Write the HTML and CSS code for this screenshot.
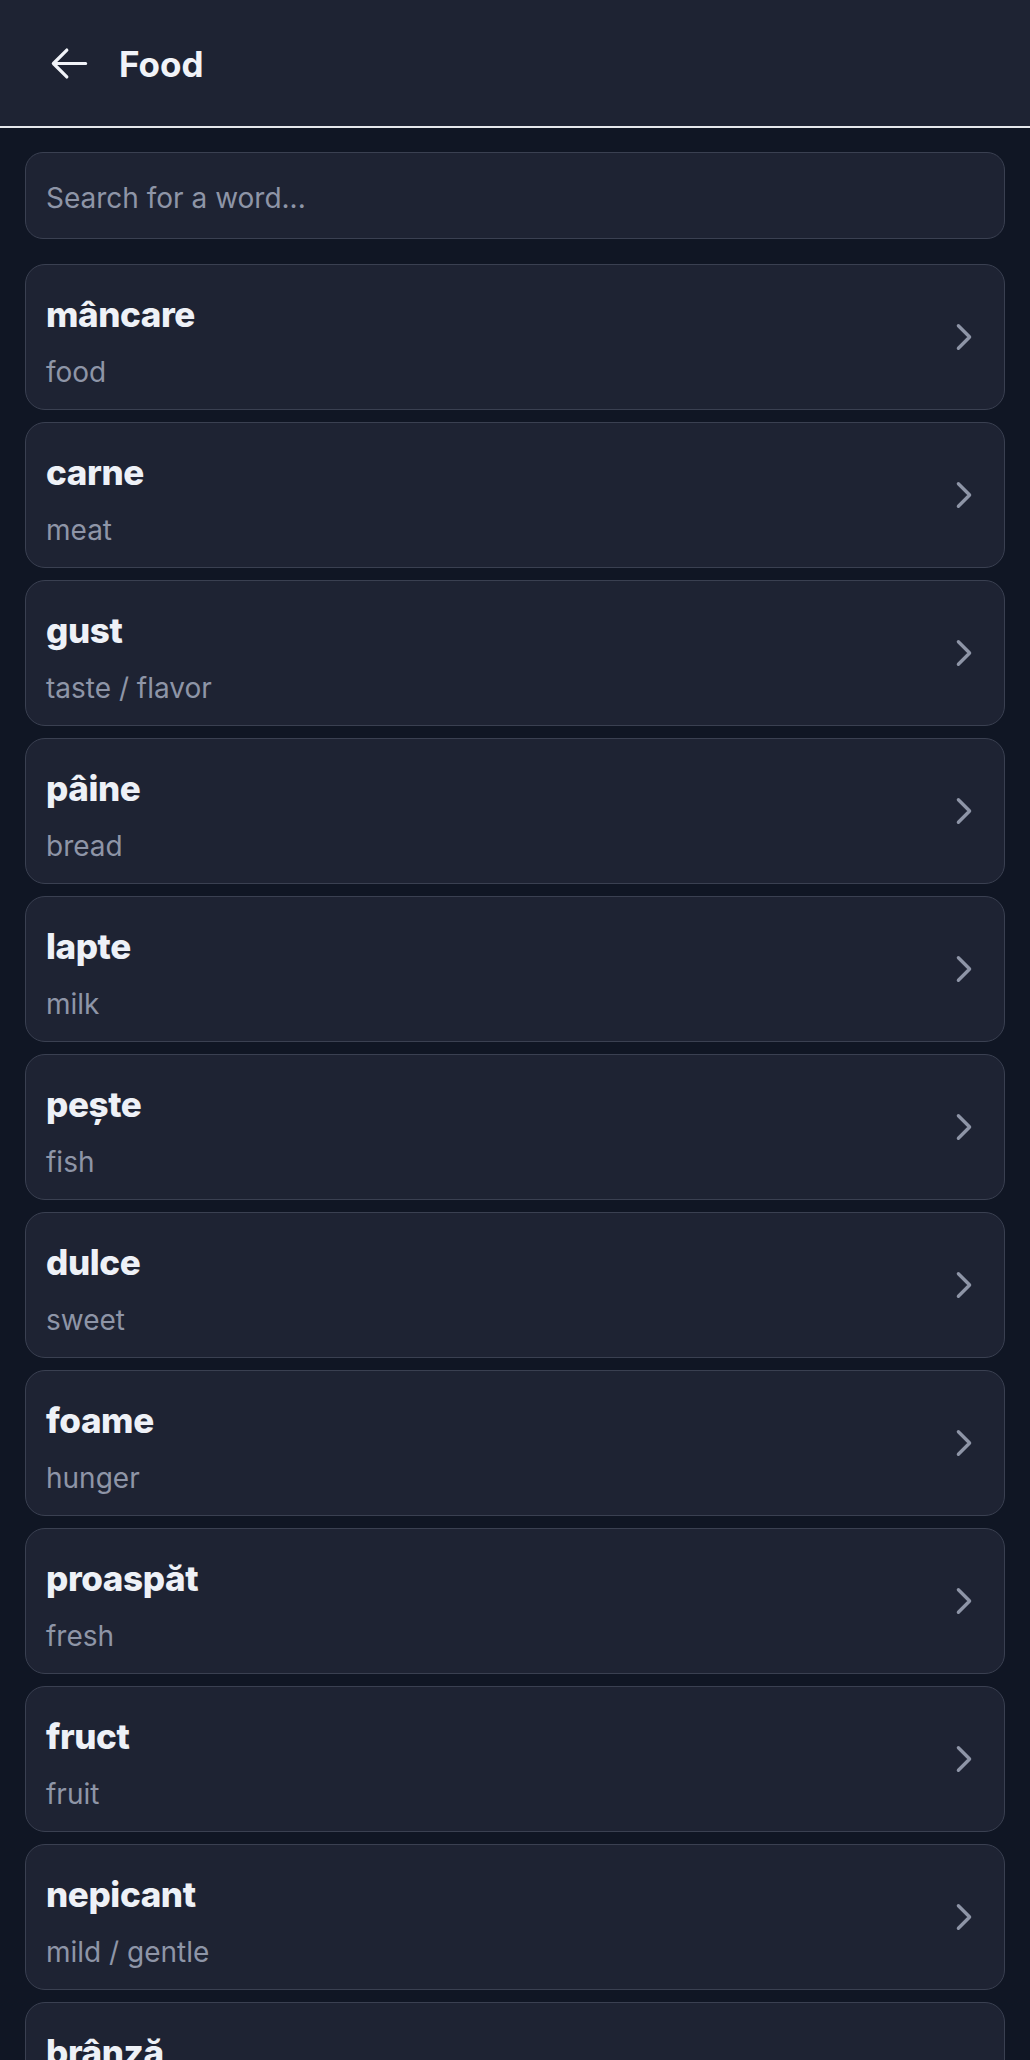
FILE: index.html
```html
<!DOCTYPE html>
<html lang="ro">
<head>
<meta charset="utf-8">
<title>Food</title>
<link rel="stylesheet" href="styles.css">
</head>
<body>
<header class="topbar">
  <button class="back" aria-label="Back">
    <svg viewBox="0 0 24 24" fill="none" stroke="currentColor" stroke-width="1.8" stroke-linecap="round" stroke-linejoin="round"><path d="M10.5 19.5 3 12m0 0 7.5-7.5M3 12h18"/></svg>
  </button>
  <h1 class="title">Food</h1>
</header>
<main class="content">
  <div class="search"><span class="placeholder">Search for a word...</span></div>
  <ul class="list">
    <li class="card"><div class="text"><div class="word">mâncare</div><div class="meaning">food</div></div><svg class="chev" viewBox="0 0 24 24" fill="none" stroke="currentColor" stroke-width="2.2" stroke-linecap="round" stroke-linejoin="round"><path d="m8.25 4.5 7.5 7.5-7.5 7.5"/></svg></li>
    <li class="card"><div class="text"><div class="word">carne</div><div class="meaning">meat</div></div><svg class="chev" viewBox="0 0 24 24" fill="none" stroke="currentColor" stroke-width="2.2" stroke-linecap="round" stroke-linejoin="round"><path d="m8.25 4.5 7.5 7.5-7.5 7.5"/></svg></li>
    <li class="card"><div class="text"><div class="word">gust</div><div class="meaning">taste / flavor</div></div><svg class="chev" viewBox="0 0 24 24" fill="none" stroke="currentColor" stroke-width="2.2" stroke-linecap="round" stroke-linejoin="round"><path d="m8.25 4.5 7.5 7.5-7.5 7.5"/></svg></li>
    <li class="card"><div class="text"><div class="word">pâine</div><div class="meaning">bread</div></div><svg class="chev" viewBox="0 0 24 24" fill="none" stroke="currentColor" stroke-width="2.2" stroke-linecap="round" stroke-linejoin="round"><path d="m8.25 4.5 7.5 7.5-7.5 7.5"/></svg></li>
    <li class="card"><div class="text"><div class="word">lapte</div><div class="meaning">milk</div></div><svg class="chev" viewBox="0 0 24 24" fill="none" stroke="currentColor" stroke-width="2.2" stroke-linecap="round" stroke-linejoin="round"><path d="m8.25 4.5 7.5 7.5-7.5 7.5"/></svg></li>
    <li class="card"><div class="text"><div class="word">pește</div><div class="meaning">fish</div></div><svg class="chev" viewBox="0 0 24 24" fill="none" stroke="currentColor" stroke-width="2.2" stroke-linecap="round" stroke-linejoin="round"><path d="m8.25 4.5 7.5 7.5-7.5 7.5"/></svg></li>
    <li class="card"><div class="text"><div class="word">dulce</div><div class="meaning">sweet</div></div><svg class="chev" viewBox="0 0 24 24" fill="none" stroke="currentColor" stroke-width="2.2" stroke-linecap="round" stroke-linejoin="round"><path d="m8.25 4.5 7.5 7.5-7.5 7.5"/></svg></li>
    <li class="card"><div class="text"><div class="word">foame</div><div class="meaning">hunger</div></div><svg class="chev" viewBox="0 0 24 24" fill="none" stroke="currentColor" stroke-width="2.2" stroke-linecap="round" stroke-linejoin="round"><path d="m8.25 4.5 7.5 7.5-7.5 7.5"/></svg></li>
    <li class="card"><div class="text"><div class="word">proaspăt</div><div class="meaning">fresh</div></div><svg class="chev" viewBox="0 0 24 24" fill="none" stroke="currentColor" stroke-width="2.2" stroke-linecap="round" stroke-linejoin="round"><path d="m8.25 4.5 7.5 7.5-7.5 7.5"/></svg></li>
    <li class="card"><div class="text"><div class="word">fruct</div><div class="meaning">fruit</div></div><svg class="chev" viewBox="0 0 24 24" fill="none" stroke="currentColor" stroke-width="2.2" stroke-linecap="round" stroke-linejoin="round"><path d="m8.25 4.5 7.5 7.5-7.5 7.5"/></svg></li>
    <li class="card"><div class="text"><div class="word">nepicant</div><div class="meaning">mild / gentle</div></div><svg class="chev" viewBox="0 0 24 24" fill="none" stroke="currentColor" stroke-width="2.2" stroke-linecap="round" stroke-linejoin="round"><path d="m8.25 4.5 7.5 7.5-7.5 7.5"/></svg></li>
    <li class="card"><div class="text"><div class="word">brânză</div><div class="meaning">cheese</div></div><svg class="chev" viewBox="0 0 24 24" fill="none" stroke="currentColor" stroke-width="2.2" stroke-linecap="round" stroke-linejoin="round"><path d="m8.25 4.5 7.5 7.5-7.5 7.5"/></svg></li>
    <li class="card"><div class="text"><div class="word">apă</div><div class="meaning">water</div></div><svg class="chev" viewBox="0 0 24 24" fill="none" stroke="currentColor" stroke-width="2.2" stroke-linecap="round" stroke-linejoin="round"><path d="m8.25 4.5 7.5 7.5-7.5 7.5"/></svg></li>
  </ul>
</main>
</body>
</html>
```

FILE: styles.css
```css
* { box-sizing: border-box; }
html, body { margin: 0; padding: 0; }
body {
  background: #101624;
  font-family: Inter, "Noto Sans", "Liberation Sans", sans-serif;
  color: #eef1f7;
}
.topbar {
  height: 128px;
  background: #1e2333;
  border-bottom: 2px solid #e5e7eb;
  display: flex;
  align-items: center;
  padding-left: 48px;
  gap: 28px;
}
.back {
  width: 43px;
  height: 43px;
  padding: 0;
  border: 0;
  background: none;
  color: #f1f3f8;
  display: flex;
}
.back svg { width: 43px; height: 43px; }
.title {
  margin: 0;
  padding-top: 2px;
  font-size: 35px;
  font-weight: 700;
  line-height: 1;
  color: #f1f3f8;
}
.content {
  padding: 24px 25px 0;
}
.search {
  height: 87px;
  border: 1px solid #3a4051;
  border-radius: 18px;
  background: #1e2333;
  display: flex;
  align-items: center;
  padding: 4px 20px 0;
}
.placeholder {
  font-size: 28px;
  color: #8e95a7;
}
.list {
  list-style: none;
  margin: 25px 0 0;
  padding: 0;
  display: flex;
  flex-direction: column;
  gap: 12px;
}
.card {
  height: 146px;
  border: 1px solid #3a4051;
  border-radius: 20px;
  background: #1e2333;
  display: flex;
  align-items: center;
  justify-content: space-between;
  padding: 0 22px 0 20px;
}
.text {
  display: flex;
  flex-direction: column;
  padding-top: 4px;
}
.word {
  font-size: 35px;
  font-weight: 800;
  line-height: 54px;
  letter-spacing: -0.4px;
  color: #eef1f7;
}
.meaning {
  font-size: 28px;
  line-height: 40px;
  margin-top: 11px;
  color: #8e95a7;
}
.chev {
  width: 36px;
  height: 36px;
  color: #8e95a7;
  flex-shrink: 0;
}
```
